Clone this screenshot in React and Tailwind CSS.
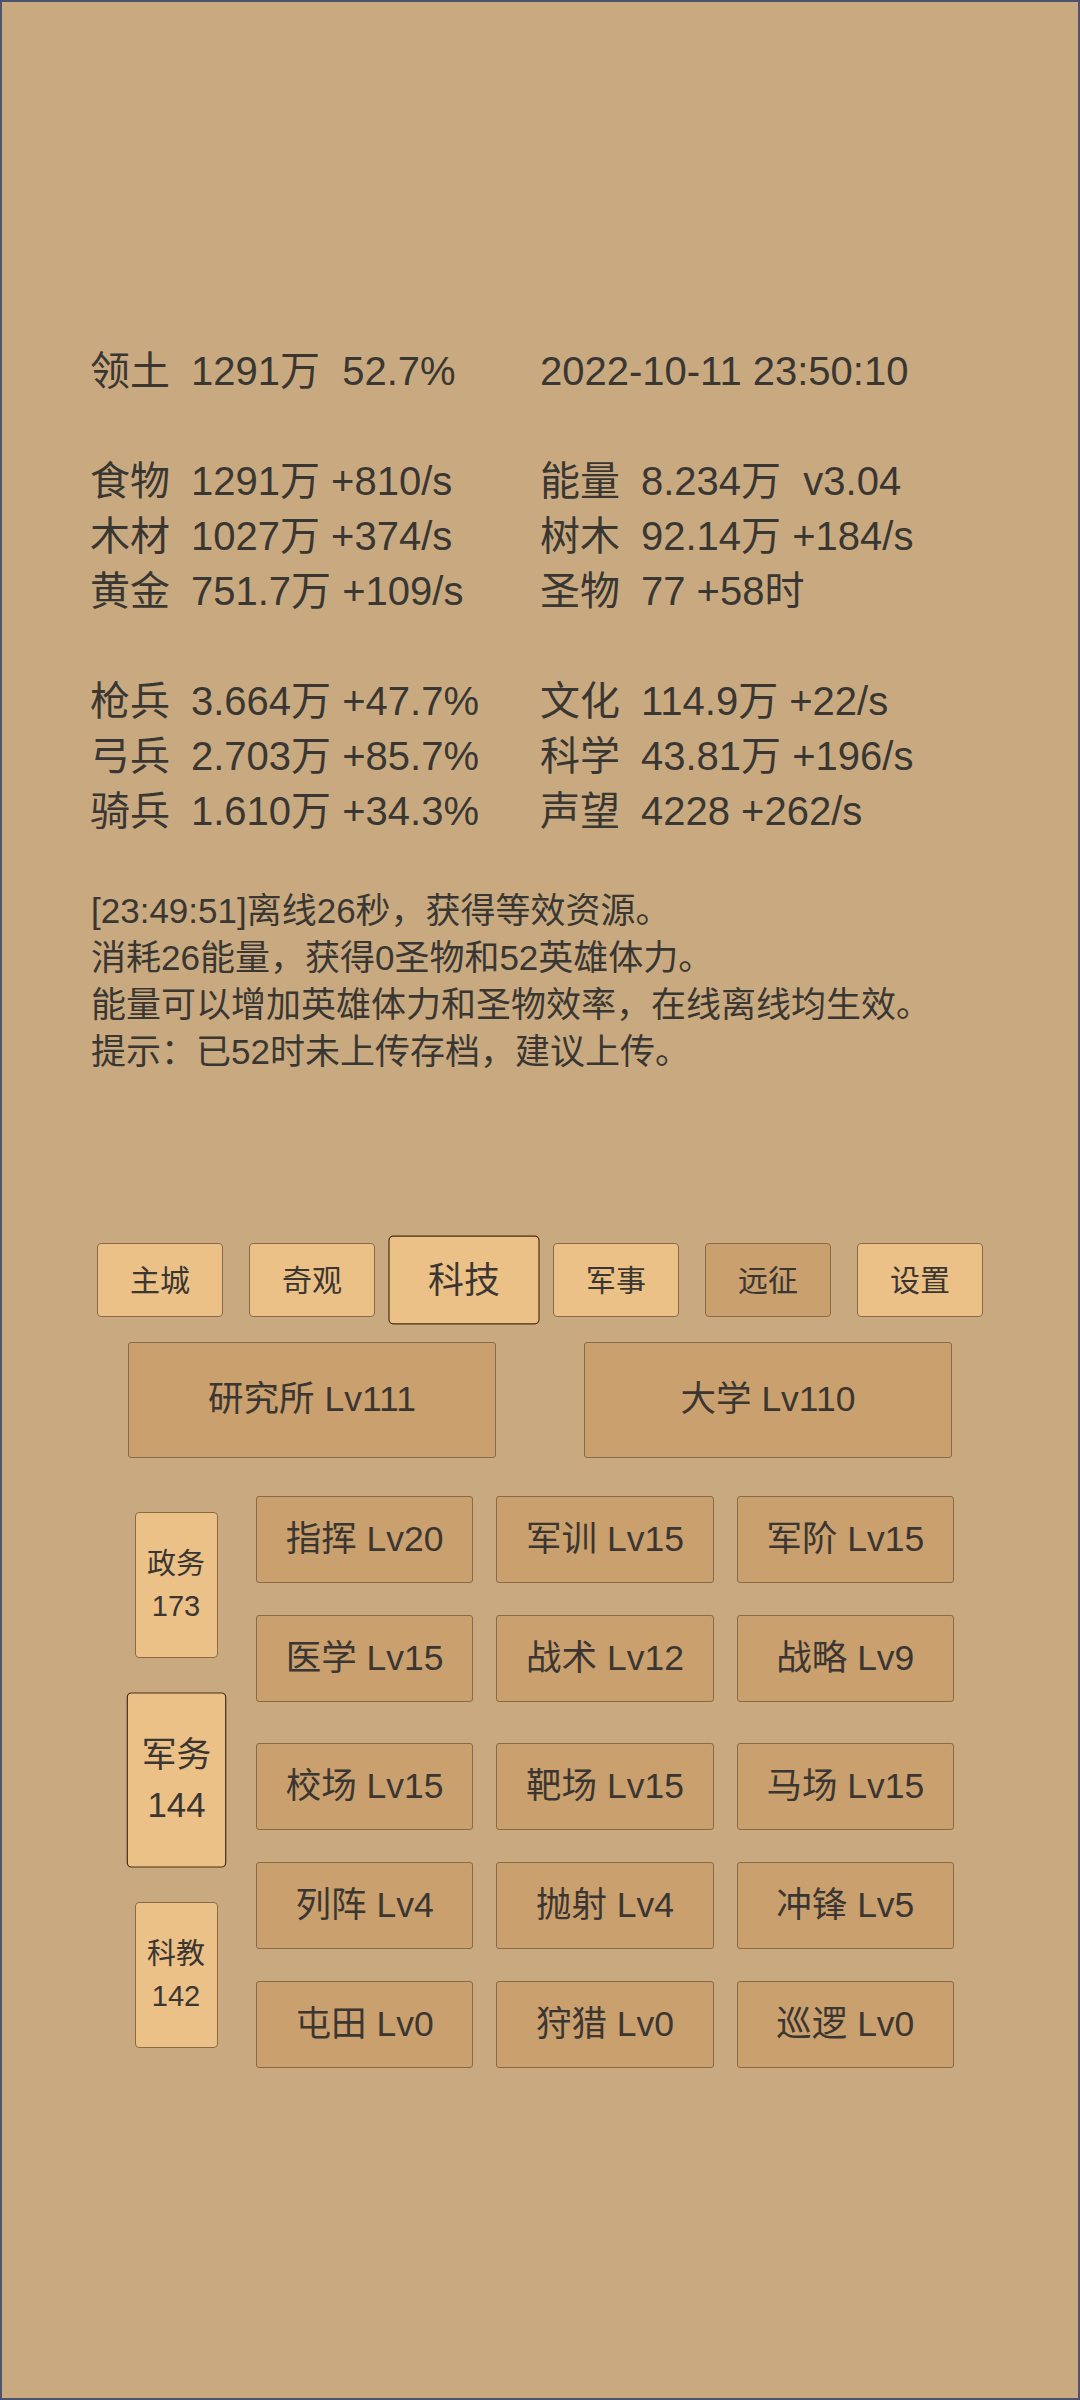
import React from "react";

const font = { fontFamily: '"Liberation Sans", "Noto Sans CJK SC", sans-serif' };

const stats = [
  [["领土", "1291万\u00a0\u00a052.7%"], [null, "2022-10-11 23:50:10"]],
  null,
  [["食物", "1291万 +810/s"], ["能量", "8.234万\u00a0\u00a0v3.04"]],
  [["木材", "1027万 +374/s"], ["树木", "92.14万 +184/s"]],
  [["黄金", "751.7万 +109/s"], ["圣物", "77 +58时"]],
  null,
  [["枪兵", "3.664万 +47.7%"], ["文化", "114.9万 +22/s"]],
  [["弓兵", "2.703万 +85.7%"], ["科学", "43.81万 +196/s"]],
  [["骑兵", "1.610万 +34.3%"], ["声望", "4228 +262/s"]],
];

const logs = [
  "[23:49:51]离线26秒，获得等效资源。",
  "消耗26能量，获得0圣物和52英雄体力。",
  "能量可以增加英雄体力和圣物效率，在线离线均生效。",
  "提示：已52时未上传存档，建议上传。",
];

const tabs = [
  { name: "主城" },
  { name: "奇观" },
  { name: "科技", active: true },
  { name: "军事" },
  { name: "远征", dim: true },
  { name: "设置" },
];

const cats = [
  { name: "政务", n: 173 },
  { name: "军务", n: 144, active: true },
  { name: "科教", n: 142 },
];

const techA = [
  ["指挥 Lv20", "军训 Lv15", "军阶 Lv15"],
  ["医学 Lv15", "战术 Lv12", "战略 Lv9"],
];
const techB = [
  ["校场 Lv15", "靶场 Lv15", "马场 Lv15"],
  ["列阵 Lv4", "抛射 Lv4", "冲锋 Lv5"],
  ["屯田 Lv0", "狩猎 Lv0", "巡逻 Lv0"],
];

function StatCell({ cell }) {
  const [label, value] = cell;
  return (
    <div className="flex w-[450px]">
      {label && <span className="w-[101px] shrink-0">{label}</span>}
      <span className="whitespace-pre">{value}</span>
    </div>
  );
}

function TechRow({ row }) {
  return (
    <div className="grid grid-cols-3 gap-x-[23px]">
      {row.map((t) => (
        <button
          key={t}
          className="h-[87px] rounded-[3px] border border-[#8a6a45] bg-[#c9a06e] text-[35.5px] text-[#3b3631]"
        >
          {t}
        </button>
      ))}
    </div>
  );
}

export default function App() {
  return (
    <div
      className="box-border h-[2400px] w-[1080px] overflow-hidden border-2 border-[#4e5470] bg-[#c9aa80] text-[#3a3733]"
      style={font}
    >
      {/* resources */}
      <div className="pl-[88px] pt-[342px] text-[40px] leading-[55px]">
        {stats.map((row, i) =>
          row ? (
            <div key={i} className="flex h-[55px]">
              <StatCell cell={row[0]} />
              <StatCell cell={row[1]} />
            </div>
          ) : (
            <div key={i} className="h-[55px]" />
          )
        )}
      </div>

      {/* log */}
      <div className="mt-[48px] pl-[89px] text-[35px] leading-[47px]">
        {logs.map((l) => (
          <div key={l}>{l}</div>
        ))}
      </div>

      {/* tabs */}
      <div className="mt-[161px] flex h-[88px] items-center justify-center">
        {tabs.map((t) => (
          <div key={t.name} className="flex w-[152px] justify-center">
            <button
              className={
                "h-[74px] w-[126px] rounded-[4px] border text-[30px] text-[#3b3631] " +
                (t.active
                  ? "scale-[1.2] border-[#4a2e12] bg-[#ebc187]"
                  : t.dim
                  ? "border-[#8a6a45] bg-[#c9a06e]"
                  : "border-[#8a6a45] bg-[#ebc187]")
              }
            >
              {t.name}
            </button>
          </div>
        ))}
      </div>

      {/* buildings */}
      <div className="mt-[18px] flex justify-center">
        {["研究所 Lv111", "大学 Lv110"].map((b) => (
          <div key={b} className="flex w-[456px] justify-center">
            <button className="h-[116px] w-[368px] rounded-[3px] border border-[#8a6a45] bg-[#c9a06e] text-[35.5px] text-[#3b3631]">
              {b}
            </button>
          </div>
        ))}
      </div>

      {/* tech section */}
      <div className="mx-auto mt-[38px] flex w-[828px] gap-x-[30px]">
        <div className="flex w-[100px] flex-col items-center gap-y-[49px] pt-[16px]">
          {cats.map((c) => (
            <button
              key={c.name}
              className={
                "flex h-[146px] w-[83px] flex-col items-center justify-center rounded-[4px] border bg-[#ebc187] text-[29px] leading-[42px] text-[#3b3631] " +
                (c.active ? "scale-[1.2] border-[#4a2e12]" : "border-[#8a6a45]")
              }
            >
              <span>{c.name}</span>
              <span>{c.n}</span>
            </button>
          ))}
        </div>
        <div className="flex w-[698px] flex-col">
          <div className="flex flex-col gap-y-[32px]">
            {techA.map((r, i) => (
              <TechRow key={i} row={r} />
            ))}
          </div>
          <div className="mt-[41px] flex flex-col gap-y-[32px]">
            {techB.map((r, i) => (
              <TechRow key={i} row={r} />
            ))}
          </div>
        </div>
      </div>
    </div>
  );
}
